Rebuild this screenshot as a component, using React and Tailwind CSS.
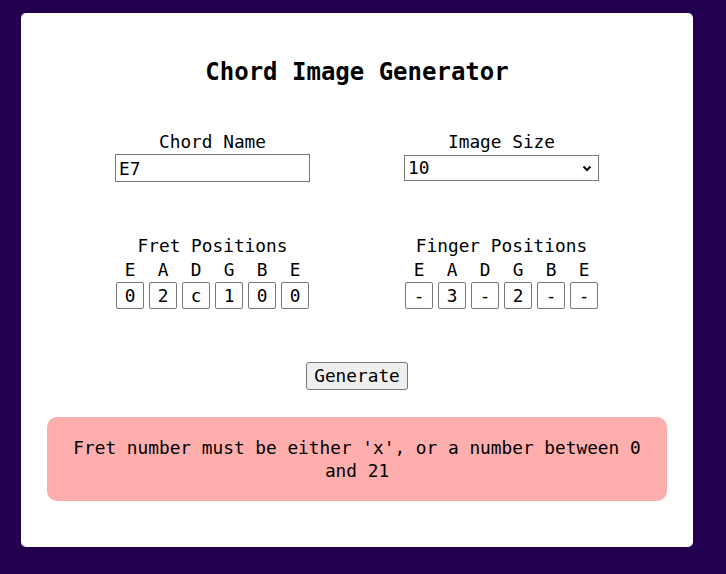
import React from "react";

const strings = ["E", "A", "D", "G", "B", "E"];
const frets = ["0", "2", "c", "1", "0", "0"];
const fingers = ["-", "3", "-", "2", "-", "-"];

function Positions({ title, values }) {
  return (
    <div className="flex w-[195px] flex-col items-center">
      <div className="leading-[24px]">{title}</div>
      <div className="flex gap-[5px] leading-[24px]">
        {strings.map((s, i) => (
          <div key={i} className="w-[28px] text-center">{s}</div>
        ))}
      </div>
      <div className="flex gap-[5px]">
        {values.map((v, i) => (
          <input
            key={i}
            readOnly
            value={v}
            className="h-[27px] w-[28px] rounded-[2px] border border-[#767676] bg-white p-0 text-center leading-[25px] outline-none"
          />
        ))}
      </div>
    </div>
  );
}

export default function App() {
  return (
    <div
      className="min-h-[574px] bg-[#22004f] pt-[13px] pb-[27px] text-black text-[17.8px]"
      style={{ fontFamily: '"DejaVu Sans Mono", "Liberation Mono", monospace' }}
    >
      <div className="mx-[21px] w-[672px] rounded-[5px] bg-white pt-[45px] pb-[46px]">
        <h1 className="text-center text-[24px] font-bold leading-[28px]">Chord Image Generator</h1>

        <div className="mt-[44px] flex justify-evenly">
          <div className="flex w-[195px] flex-col items-center">
            <div className="leading-[24px]">Chord Name</div>
            <input
              readOnly
              value="E7"
              className="h-[28px] w-[195px] border border-[#767676] bg-white px-[3px] leading-[26px] outline-none"
            />
          </div>
          <div className="flex w-[195px] flex-col items-center">
            <div className="leading-[24px]">Image Size</div>
            <div className="relative mt-[1px] h-[26px] w-[195px] border border-[#767676] bg-white">
              <div className="px-[3px] leading-[24px]">10</div>
              <svg
                className="absolute right-[6px] top-[9px]"
                width="10"
                height="7"
                viewBox="0 0 10 7"
                fill="none"
              >
                <path d="M1.5 1.5 L5 5 L8.5 1.5" stroke="#000" strokeWidth="2" />
              </svg>
            </div>
          </div>
        </div>

        <div className="mt-[52px] flex justify-evenly">
          <Positions title="Fret Positions" values={frets} />
          <Positions title="Finger Positions" values={fingers} />
        </div>

        <div className="mt-[53px] flex justify-center">
          <button className="h-[28px] rounded-[3px] border border-[#767676] bg-[#efefef] px-[7px] leading-[24px]">
            Generate
          </button>
        </div>

        <div className="mx-[26px] mt-[27px] rounded-[10px] bg-[#ffaeae] px-[20px] py-[19px] text-center leading-[23px]">
          Fret number must be either 'x', or a number between 0 and 21
        </div>
      </div>
    </div>
  );
}
